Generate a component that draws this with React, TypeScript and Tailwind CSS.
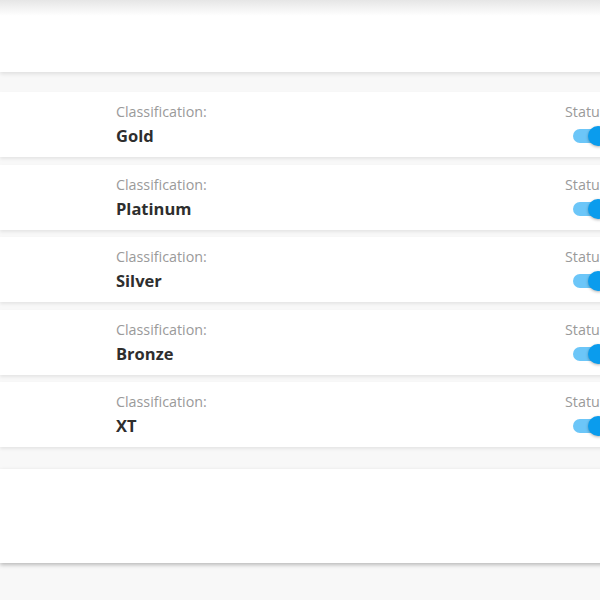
import React from 'react';

const rows = ['Gold', 'Platinum', 'Silver', 'Bronze', 'XT'];

const Toggle: React.FC = () => (
  <div className="relative mt-[5px] h-5 w-[36px]">
    <div className="absolute left-0 top-[3px] h-[14px] w-[34px] rounded-full bg-[#6cc6f8]" />
    <div className="absolute left-[15px] top-0 h-5 w-5 rounded-full bg-[#0a9ced] shadow-[0_1px_3px_rgba(0,0,0,0.3)]" />
  </div>
);

const Row: React.FC<{ name: string }> = ({ name }) => (
  <div className="flex h-[65px] bg-white shadow-[0_2px_3px_rgba(0,0,0,0.08)]">
    <div className="w-[116px] shrink-0" />
    <div className="flex w-[449px] shrink-0 flex-col pt-[10px]">
      <span className="text-[14.3px] leading-[19px] text-[#9a9a9a]">Classification:</span>
      <span className="mt-[4px] text-[16.5px] font-bold leading-[22px] text-[#2e2e2e]">{name}</span>
    </div>
    <div className="flex flex-col pt-[10px]">
      <span className="text-[14.3px] leading-[19px] text-[#9a9a9a]">Status:</span>
      <div className="pl-[8px]">
        <Toggle />
      </div>
    </div>
  </div>
);

export default function App() {
  return (
    <div
      className="h-[600px] w-[600px] overflow-hidden bg-[#f8f8f8]"
      style={{ fontFamily: '"Open Sans", "Liberation Sans", sans-serif' }}
    >
      <div className="w-[720px]">
        <div className="h-[72px] bg-gradient-to-b from-[#e6e6e6] via-white via-[22%] to-white shadow-[0_2px_4px_rgba(0,0,0,0.1)]" />
        <div className="flex flex-col gap-[7.5px] pt-[20px]">
          {rows.map((r) => (
            <Row key={r} name={r} />
          ))}
        </div>
        <div className="mt-[22px] h-[94px] bg-white shadow-[0_2px_4px_rgba(0,0,0,0.25)]" />
      </div>
    </div>
  );
}
